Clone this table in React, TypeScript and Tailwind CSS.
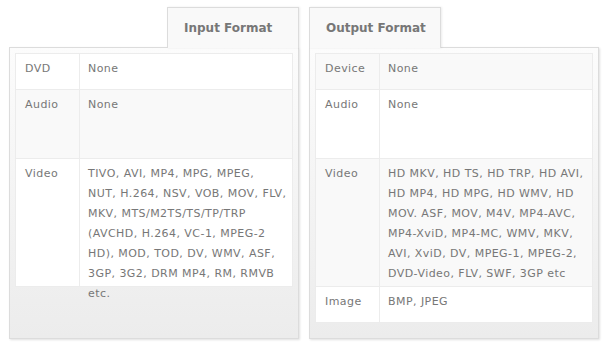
import React from "react";

type Row = { k: string; v: React.ReactNode; h: number; gray: boolean };

const inputVideoLines = [
  "TIVO, AVI, MP4, MPG, MPEG,",
  "NUT, H.264, NSV, VOB, MOV, FLV,",
  "MKV, MTS/M2TS/TS/TP/TRP",
  "(AVCHD, H.264, VC-1, MPEG-2",
  "HD), MOD, TOD, DV, WMV, ASF,",
  "3GP, 3G2, DRM MP4, RM, RMVB",
  "etc.",
];

const inputRows: Row[] = [
  { k: "DVD", v: "None", h: 36, gray: false },
  { k: "Audio", v: "None", h: 69, gray: true },
  {
    k: "Video",
    v: (
      <>
        {inputVideoLines.map((l, i) => (
          <div key={i} className="whitespace-nowrap">
            {l}
          </div>
        ))}
      </>
    ),
    h: 128,
    gray: false,
  },
];

const outputRows: Row[] = [
  { k: "Device", v: "None", h: 36, gray: true },
  { k: "Audio", v: "None", h: 69, gray: false },
  {
    k: "Video",
    v: "HD MKV, HD TS, HD TRP, HD AVI, HD MP4, HD MPG, HD WMV, HD MOV. ASF, MOV, M4V, MP4-AVC, MP4-XviD, MP4-MC, WMV, MKV, AVI, XviD, DV, MPEG-1, MPEG-2, DVD-Video, FLV, SWF, 3GP etc",
    h: 128,
    gray: true,
  },
  { k: "Image", v: "BMP, JPEG", h: 36, gray: false },
];

function Panel({ title, rows, right }: { title: string; rows: Row[]; right: boolean }) {
  return (
    <div className="flex flex-col w-[290px]">
      <div
        className={`relative z-10 -mb-px h-[41px] w-[132px] border border-b-0 border-[#dcdcdc] bg-[#f9f9f9] pl-[16px] pt-[10px] text-[12px] font-bold tracking-normal text-[#777] shadow-[1px_0_2px_rgba(0,0,0,0.08)] ${
          right ? "self-start" : "self-end"
        }`}
      >
        {title}
      </div>
      <div className="h-[292px] border border-[#dcdcdc] bg-gradient-to-b from-[#fcfcfc] to-[#ececec] p-[5px] shadow-[1px_1px_2px_rgba(0,0,0,0.12)]">
        <div className="border-t border-l border-r border-[#ececec]">
          {rows.map((r, i) => (
            <div
              key={i}
              className={`flex border-b border-[#ececec] ${r.gray ? "bg-[#f9f9f9]" : "bg-white"}`}
              style={{ height: r.h }}
            >
              <div className="w-[64px] shrink-0 border-r border-[#ececec] pl-[9px] pt-[5px]">{r.k}</div>
              <div className="flex-1 pl-[8px] pr-[7px] pt-[5px]">{r.v}</div>
            </div>
          ))}
        </div>
      </div>
    </div>
  );
}

export default function App() {
  return (
    <div
      className="flex gap-[10px] pl-[9px] pt-[7px] w-[611px] h-[348px] bg-white text-[11px] leading-[20px] tracking-[0.45px] text-[#777]"
      style={{ fontFamily: '"DejaVu Sans", Verdana, sans-serif' }}
    >
      <Panel title="Input Format" rows={inputRows} right={false} />
      <Panel title="Output Format" rows={outputRows} right={true} />
    </div>
  );
}
